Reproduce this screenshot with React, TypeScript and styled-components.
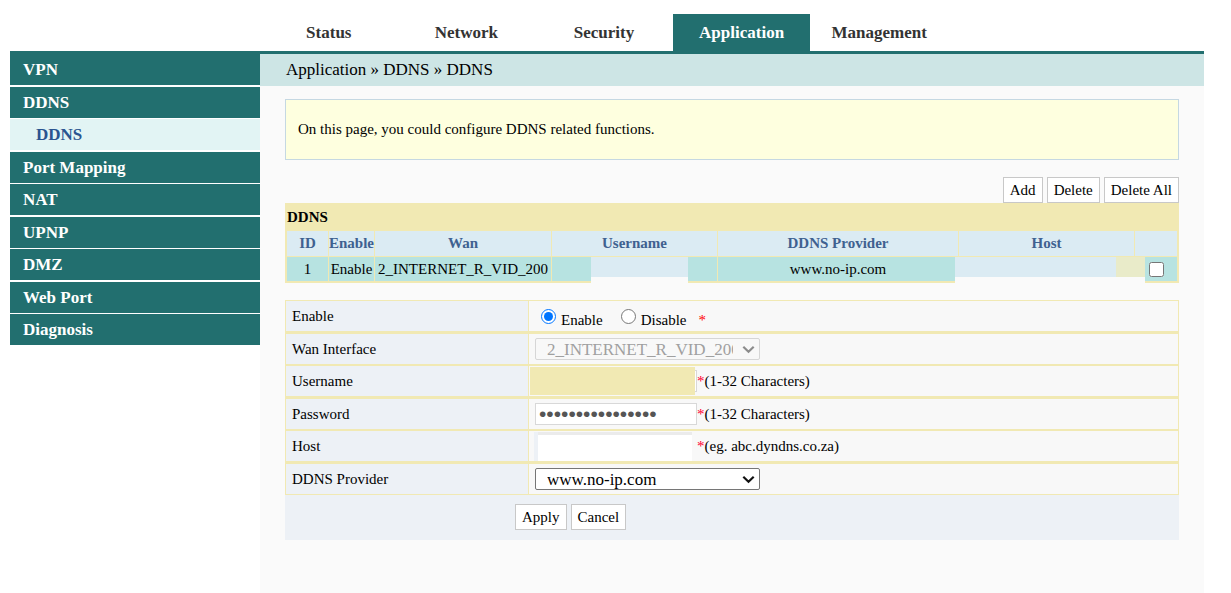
import React from "react";
import styled, { createGlobalStyle } from "styled-components";

const teal = "#226f6f";
const khaki = "#f1e9b3";
const paper = "#fafafa";
const mist = "#edf1f6";
const ice = "#dbebf3";

const GlobalStyle = createGlobalStyle`
  *, *::before, *::after { box-sizing: border-box; }
  body {
    margin: 0;
    background: #fff;
    color: #000;
    font: 15px/20px "Liberation Serif", "Times New Roman", serif;
  }
  button, input, select { font-family: inherit; margin: 0; }
`;

const Page = styled.div`
  display: flex;
  flex-direction: column;
  min-height: 100vh;
  padding: 14px 27px 0 10px;
`;

const TopNav = styled.nav`
  display: flex;
  padding-left: 250px;
  border-bottom: 3px solid ${teal};
`;

const TabList = styled.div`
  display: grid;
  grid-template-columns: repeat(5, 1fr);
  width: 688px;
`;

const Tab = styled.a<{ $active?: boolean }>`
  height: 37px;
  line-height: 37px;
  text-align: center;
  text-decoration: none;
  font-size: 17px;
  font-weight: bold;
  color: ${(p) => (p.$active ? "#fff" : "#333")};
  background: ${(p) => (p.$active ? teal : "transparent")};
`;

const Body = styled.div`
  display: flex;
  flex: 1;
`;

const Sidebar = styled.nav`
  display: flex;
  flex-direction: column;
  flex: none;
  width: 250px;
`;

const SideLink = styled.a<{ $sub?: boolean }>`
  height: 31px;
  margin-bottom: 1px;
  padding-left: ${(p) => (p.$sub ? 26 : 13)}px;
  line-height: 31px;
  font-size: 17px;
  font-weight: bold;
  text-decoration: none;
  color: ${(p) => (p.$sub ? "#2a5490" : "#fff")};
  background: ${(p) => (p.$sub ? "#e2f4f4" : teal)};
  &:nth-child(odd) { margin-bottom: 2px; }
`;

const Main = styled.main`
  flex: 1;
  min-width: 0;
  background: ${paper};
`;

const Breadcrumb = styled.div`
  height: 32px;
  padding-left: 26px;
  line-height: 32px;
  font-size: 17px;
  background: #cde5e5;
`;

const Content = styled.div`
  padding: 13px 25px 24px;
`;

const Notice = styled.p`
  margin: 0 0 17px;
  padding: 19px 12px 20px;
  border: 1px solid #c5d8e2;
  background: #feffdf;
`;

const Toolbar = styled.div`
  display: flex;
  justify-content: flex-end;
  gap: 4px;
`;

const Button = styled.button`
  height: 26px;
  padding: 0 6px;
  border: 1px solid #c8c8c8;
  background: #fff;
  color: #000;
  font-size: 15px;
`;

const EntryTable = styled.table`
  width: 100%;
  table-layout: fixed;
  margin-bottom: 17px;
  border: 1px solid ${khaki};
  border-spacing: 1px;
  background: ${khaki};
  text-align: center;

  caption {
    height: 26px;
    padding: 4px 2px 2px;
    background: ${khaki};
    font-weight: bold;
    text-align: left;
  }
  th {
    height: 25px;
    padding: 0 0 2px;
    background: ${ice};
    color: #3f6190;
  }
  td {
    position: relative;
    height: 24px;
    padding: 0;
    background: #b7e3e1;
    white-space: nowrap;
  }
`;

const Col = styled.col<{ $w?: number }>`
  width: ${(p) => (p.$w ? p.$w + "px" : "auto")};
`;

const Mask = styled.span<{ $left: number; $right: number; $tail?: number }>`
  position: absolute;
  z-index: 1;
  top: 0;
  left: ${(p) => p.$left}px;
  right: ${(p) => p.$right}px;
  height: 26px;
  border-bottom: 6px solid ${paper};
  background: linear-gradient(to left, #e9ebc9 ${(p) => p.$tail ?? 0}px, ${ice} ${(p) => p.$tail ?? 0}px);
`;

const RowCheck = styled.input`
  display: block;
  width: 15px;
  height: 15px;
  && { margin-left: 14px; }
`;

const FormTable = styled.table`
  width: 100%;
  table-layout: fixed;
  border: 1px solid ${khaki};
  border-spacing: 0;

  th, td {
    height: 30px;
    padding: 0 6px;
    background: #f8f8f8;
    text-align: left;
    font-weight: normal;
  }
  th {
    width: 243px;
    border-right: 1px solid ${khaki};
    background: ${mist};
  }
  tr:nth-child(even) > * { height: 33px; border-top: 3px solid ${khaki}; }
  tr:nth-child(odd):not(:first-child) > * { height: 32px; border-top: 2px solid ${khaki}; }
`;

const Field = styled.div`
  position: relative;
  display: flex;
  align-items: center;
  height: 30px;
`;

const RadioLabel = styled.label`
  display: flex;
  align-items: center;
  gap: 5px;
  height: 30px;
  padding-left: 6px;
  margin-right: 12px;
  & > span { padding-top: 8px; }
`;

const Radio = styled.input`
  width: 15px;
  height: 15px;
`;

const Star = styled.span<{ $low?: boolean }>`
  color: ${(p) => (p.$low ? "#f00" : "#f03")};
  padding-top: ${(p) => (p.$low ? 8 : 0)}px;
`;

const TextBox = styled.input`
  flex: none;
  width: 162px;
  height: 22px;
  padding: 0 3px;
  border: 1px solid #d8d8d8;
  border-radius: 0;
  background: #fff;
  color: #555;
  font-size: 15px;
  line-height: 20px;
`;

const PasswordBox = styled(TextBox)`
  font-family: "Liberation Sans", Arial, sans-serif;
  font-size: 21px;
`;

const SelectBox = styled.div`
  position: relative;
  display: flex;
  width: 225px;

  svg {
    position: absolute;
    top: 7px;
    right: 5px;
    pointer-events: none;
  }
`;

const Select = styled.select`
  appearance: none;
  width: 100%;
  height: 22px;
  padding: 1px 26px 0 11px;
  border: 1px solid #767676;
  border-radius: 2px;
  background: #fff;
  color: #000;
  font-size: 17px;
  line-height: 20px;

  &:disabled {
    border-color: #d6d6d6;
    background: #f8f8f8;
    color: #a0a0a0;
    opacity: 1;
  }
  & + svg { color: #111; }
  &:disabled + svg { color: #8c8c8c; }
`;

const UserMask = styled.span`
  position: absolute;
  top: 1px;
  left: -5px;
  width: 165px;
  height: 28px;
  background: ${khaki};
`;

const HostMask = styled.span`
  position: absolute;
  top: 1px;
  left: -1px;
  width: 163px;
  height: 29px;
  border-left: 4px solid ${mist};
  border-right: 5px solid #f8f8f8;
  background: linear-gradient(#ebebeb 3px, #fff 3px);
`;

const FormFooter = styled.div`
  display: flex;
  gap: 4px;
  padding: 9px 230px 10px;
  background: ${mist};
`;

function DropDown({ id, value, disabled }: { id: string; value: string; disabled?: boolean }) {
  return (
    <SelectBox>
      <Select id={id} disabled={disabled}>
        <option>{value}</option>
      </Select>
      <svg width="13" height="9" viewBox="0 0 13 9" fill="none" stroke="currentColor" strokeWidth="2.2">
        <path d="M1.3 1.8 6.5 6.8 11.7 1.8" />
      </svg>
    </SelectBox>
  );
}

const tabs = ["Status", "Network", "Security", "Application", "Management"];
const side = [
  { text: "VPN" },
  { text: "DDNS" },
  { text: "DDNS", sub: true },
  { text: "Port Mapping" },
  { text: "NAT" },
  { text: "UPNP" },
  { text: "DMZ" },
  { text: "Web Port" },
  { text: "Diagnosis" },
];

export default function App() {
  return (
    <>
      <GlobalStyle />
      <Page>
        <TopNav>
          <TabList>
            {tabs.map((t) => (
              <Tab key={t} href="#" $active={t === "Application"}>{t}</Tab>
            ))}
          </TabList>
        </TopNav>
        <Body>
          <Sidebar>
            {side.map((s, i) => (
              <SideLink key={i} href="#" $sub={s.sub}>{s.text}</SideLink>
            ))}
          </Sidebar>
          <Main>
            <Breadcrumb>Application » DDNS » DDNS</Breadcrumb>
            <Content>
              <Notice>On this page, you could configure DDNS related functions.</Notice>
              <Toolbar>
                <Button type="button">Add</Button>
                <Button type="button">Delete</Button>
                <Button type="button">Delete All</Button>
              </Toolbar>
              <EntryTable>
                <caption>DDNS</caption>
                <colgroup>
                  <Col $w={41} />
                  <Col $w={45} />
                  <Col $w={176} />
                  <Col $w={165} />
                  <Col />
                  <Col $w={175} />
                  <Col $w={42} />
                </colgroup>
                <thead>
                  <tr>
                    <th>ID</th>
                    <th>Enable</th>
                    <th>Wan</th>
                    <th>Username</th>
                    <th>DDNS Provider</th>
                    <th>Host</th>
                    <th />
                  </tr>
                </thead>
                <tbody>
                  <tr>
                    <td>1</td>
                    <td>Enable</td>
                    <td>2_INTERNET_R_VID_200</td>
                    <td><Mask $left={39} $right={29} /></td>
                    <td>www.no-ip.com</td>
                    <td><Mask $left={-4} $right={-11} $tail={29} /></td>
                    <td><RowCheck type="checkbox" aria-label="Select entry 1" /></td>
                  </tr>
                </tbody>
              </EntryTable>
              <form onSubmit={(e) => e.preventDefault()}>
                <FormTable>
                  <tbody>
                    <tr>
                      <th scope="row">Enable</th>
                      <td>
                        <Field>
                          <RadioLabel>
                            <Radio type="radio" name="enable" defaultChecked />
                            <span>Enable</span>
                          </RadioLabel>
                          <RadioLabel>
                            <Radio type="radio" name="enable" />
                            <span>Disable</span>
                          </RadioLabel>
                          <Star $low>*</Star>
                        </Field>
                      </td>
                    </tr>
                    <tr>
                      <th scope="row"><label htmlFor="wan">Wan Interface</label></th>
                      <td>
                        <Field>
                          <DropDown id="wan" value="2_INTERNET_R_VID_200" disabled />
                        </Field>
                      </td>
                    </tr>
                    <tr>
                      <th scope="row"><label htmlFor="user">Username</label></th>
                      <td>
                        <Field>
                          <TextBox id="user" type="text" />
                          <UserMask />
                          <Star>*</Star>(1-32 Characters)
                        </Field>
                      </td>
                    </tr>
                    <tr>
                      <th scope="row"><label htmlFor="pass">Password</label></th>
                      <td>
                        <Field>
                          <PasswordBox id="pass" type="password" defaultValue="abcdefghijklmnop" />
                          <Star>*</Star>(1-32 Characters)
                        </Field>
                      </td>
                    </tr>
                    <tr>
                      <th scope="row"><label htmlFor="host">Host</label></th>
                      <td>
                        <Field>
                          <TextBox id="host" type="text" />
                          <HostMask />
                          <Star>*</Star>(eg. abc.dyndns.co.za)
                        </Field>
                      </td>
                    </tr>
                    <tr>
                      <th scope="row"><label htmlFor="provider">DDNS Provider</label></th>
                      <td>
                        <Field>
                          <DropDown id="provider" value="www.no-ip.com" />
                        </Field>
                      </td>
                    </tr>
                  </tbody>
                </FormTable>
                <FormFooter>
                  <Button type="submit">Apply</Button>
                  <Button type="reset">Cancel</Button>
                </FormFooter>
              </form>
            </Content>
          </Main>
        </Body>
      </Page>
    </>
  );
}
